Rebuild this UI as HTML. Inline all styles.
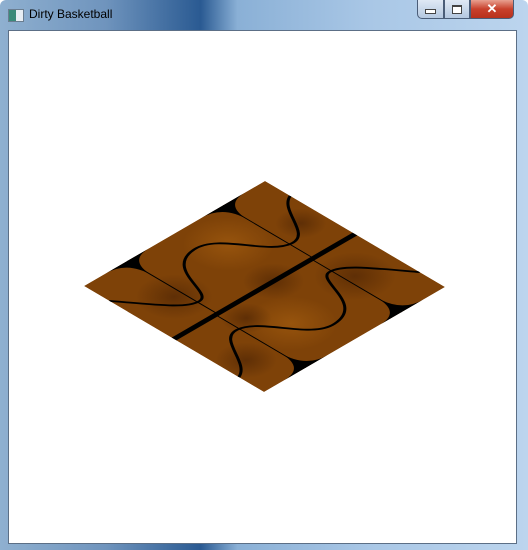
<!DOCTYPE html>
<html><head><style>
html,body{margin:0;padding:0;width:528px;height:550px;overflow:hidden;background:#fff}
.win{position:absolute;left:0;top:0;width:528px;height:550px;
background:linear-gradient(90deg,#8fb0d0 0%,#6f94bd 20%,#2a5a92 38%,#8ab0d6 45%,#a9c7e6 70%,#bcd5ee 100%);border-radius:6px 6px 0 0}
.client{position:absolute;left:8px;top:30px;width:507px;height:512px;background:#fff;border:1px solid #5c6f86}
.title{position:absolute;left:29px;top:7px;font:12px "Liberation Sans",sans-serif;color:#000}
.ico{position:absolute;left:8px;top:9px;width:14px;height:11px;border:1px solid #6a7d90;background:linear-gradient(90deg,#3a8a7a 50%,#e8eef4 50%)}
.btns{position:absolute;left:417px;top:0;height:20px;display:flex}
.b{height:19px;border:1px solid #4a5d78;border-top:none;background:linear-gradient(#dfe9f5,#b4c8e0);box-sizing:border-box}
</style></head><body>
<div class="win">
<div class="ico"></div>
<div class="title">Dirty Basketball</div>
<div class="btns">
<div class="b" style="width:27px;border-radius:0 0 0 5px"><div style="margin:9px 7px 0;height:3px;background:#fff;border:1px solid #444"></div></div>
<div class="b" style="width:26px"><div style="margin:5px 7px 0;height:6px;border:1px solid #444;border-top-width:2px;background:#fff"></div></div>
<div class="b" style="width:44px;background:linear-gradient(#e8a090,#c8412c 50%,#b8301c);border-radius:0 0 5px 0;color:#fff;font:bold 13px 'Liberation Sans',sans-serif;text-align:center;line-height:17px">✕</div>
</div>
<div class="client">
<svg width="507" height="512" style="position:absolute;left:-9px;top:-31px;overflow:visible">
<defs>
<radialGradient id="g1" cx="0.5" cy="0.5" r="0.5"><stop offset="0" stop-color="#4a2204" stop-opacity="0.6"/><stop offset="1" stop-color="#4a2204" stop-opacity="0"/></radialGradient>
<radialGradient id="g2" cx="0.5" cy="0.5" r="0.5"><stop offset="0" stop-color="#a86010" stop-opacity="0.6"/><stop offset="1" stop-color="#a86010" stop-opacity="0"/></radialGradient>
<clipPath id="c"><rect x="0" y="0" width="100" height="100"/></clipPath>
</defs>
<g transform="matrix(1.81,-1.05,1.80,1.06,84,286)">
<g clip-path="url(#c)">
<rect x="0" y="0" width="100" height="100" fill="#7e4208"/>
<circle cx="20" cy="30" r="15" fill="url(#g1)"/>
<circle cx="60" cy="20" r="18" fill="url(#g2)"/>
<circle cx="80" cy="70" r="16" fill="url(#g1)"/>
<circle cx="40" cy="75" r="18" fill="url(#g2)"/>
<circle cx="55" cy="50" r="12" fill="url(#g1)"/>
<circle cx="90" cy="30" r="10" fill="url(#g1)"/>
<circle cx="10" cy="80" r="12" fill="url(#g1)"/>
<circle cx="30" cy="60" r="10" fill="url(#g1)"/>
<g id="h" fill="none" stroke="#000" stroke-width="1.2">
<path d="M0,14 C12,30 18,39 25,39 C33,39 30,14 48,13 C62,12 66,36 78,37 C88,38 90,18 100,14"/>
<path d="M24,0 L24,50 M77,0 L77,50" stroke-width="0.5"/>
<path d="M12,0 Q24,0 24,14 Q24,0 36,0Z M65,0 Q77,0 77,14 Q77,0 89,0Z" fill="#000" stroke="none"/>
</g>
<use href="#h" transform="rotate(180 50 50)"/>
<rect x="0" y="48.7" width="100" height="2.6" fill="#000"/>
</g>
</g>
</svg>
</div>
</div>
</body></html>
